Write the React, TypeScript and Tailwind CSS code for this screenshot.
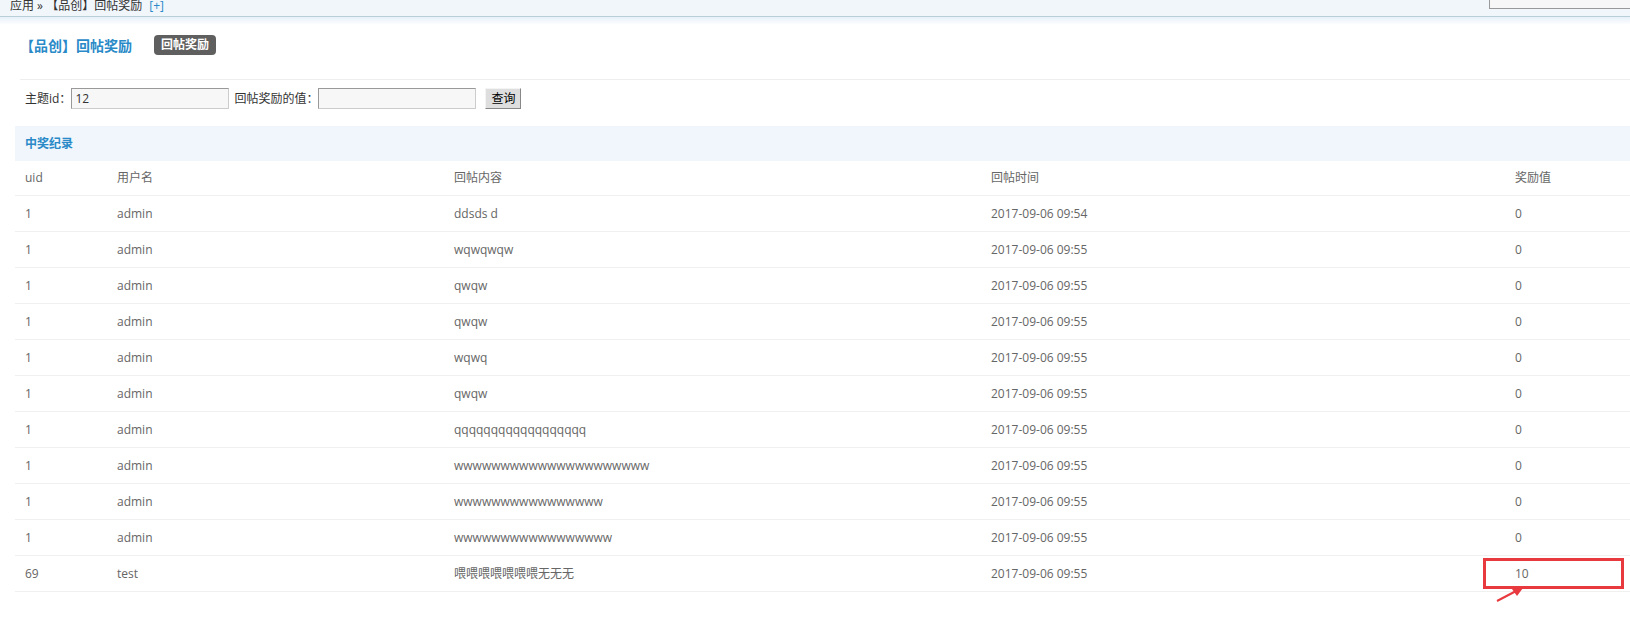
import React from 'react';

const rows = [
    { uid: '1', name: 'admin', content: 'ddsds d', time: '2017-09-06 09:54', value: '0' },
    { uid: '1', name: 'admin', content: 'wqwqwqw', time: '2017-09-06 09:55', value: '0' },
    { uid: '1', name: 'admin', content: 'qwqw', time: '2017-09-06 09:55', value: '0' },
    { uid: '1', name: 'admin', content: 'qwqw', time: '2017-09-06 09:55', value: '0' },
    { uid: '1', name: 'admin', content: 'wqwq', time: '2017-09-06 09:55', value: '0' },
    { uid: '1', name: 'admin', content: 'qwqw', time: '2017-09-06 09:55', value: '0' },
    { uid: '1', name: 'admin', content: 'qqqqqqqqqqqqqqqqqq', time: '2017-09-06 09:55', value: '0' },
    { uid: '1', name: 'admin', content: 'wwwwwwwwwwwwwwwwwwwww', time: '2017-09-06 09:55', value: '0' },
    { uid: '1', name: 'admin', content: 'wwwwwwwwwwwwwwww', time: '2017-09-06 09:55', value: '0' },
    { uid: '1', name: 'admin', content: 'wwwwwwwwwwwwwwwww', time: '2017-09-06 09:55', value: '0' },
    { uid: '69', name: 'test', content: '喂喂喂喂喂喂喂无无无', time: '2017-09-06 09:55', value: '10' },
];

function Row({ cells, head }: { cells: string[]; head?: boolean }) {
    return (
        <div className={`flex items-center border-b border-[#f0f0f0] text-[12px] text-[#666] ${head ? 'h-[35px]' : 'h-[36px]'}`}>
            <div className="w-[92px] pl-[10px]">{cells[0]}</div>
            <div className="w-[337px] pl-[10px]">{cells[1]}</div>
            <div className="w-[537px] pl-[10px]">{cells[2]}</div>
            <div className="w-[524px] pl-[10px]">{cells[3]}</div>
            <div className="flex-1 pl-[10px]">{cells[4]}</div>
        </div>
    );
}

export default function App() {
    return (
        <div className="relative w-[1630px] h-[627px] overflow-hidden bg-white" style={{ fontFamily: '"Open Sans", "Noto Sans CJK SC", sans-serif' }}>
            {/* top nav */}
            <div className="flex items-end justify-between h-[17px] bg-[#f1f6fb] border-b border-[#b8cfd8]">
                <div className="pl-[10px] text-[12px] leading-[12px] text-[#333] pb-[4px] whitespace-nowrap">
                    应用 » 【品创】回帖奖励 <span className="text-[#2a8ac8] ml-[4px]">[+]</span>
                </div>
                <div className="self-start w-[141px] h-[9px] bg-[#f7f7f7] border-l border-b border-[#999]" />
            </div>
            <div className="h-[8px] bg-gradient-to-b from-[#e6f0f9] to-white" />

            {/* title */}
            <div className="ml-[20px] h-[55px] pt-[10px] border-b border-[#eeeeee]">
                <div className="flex items-center h-[20px]">
                    <span className="text-[14px] font-bold text-[#2a8ac8]">【品创】回帖奖励</span>
                    <span className="ml-[22px] px-[7px] h-[20px] leading-[20px] rounded-[4px] bg-[#5f5f5f] text-white text-[12px] font-bold">回帖奖励</span>
                </div>
            </div>

            {/* form */}
            <div className="flex items-start h-[41px] pt-[8px] pl-[25px] text-[12px] text-[#333]">
                <span className="leading-[21px]">主题id：</span>
                <input defaultValue="12" className="w-[158px] h-[21px] px-[3px] bg-[#f7f7f7] border border-[#999] border-r-[#ccc] border-b-[#ccc] text-[12px] outline-none" />
                <span className="ml-[5px] leading-[21px]">回帖奖励的值：</span>
                <input className="w-[158px] h-[21px] px-[3px] bg-[#f7f7f7] border border-[#999] border-r-[#ccc] border-b-[#ccc] outline-none" />
                <button className="ml-[9px] h-[21px] w-[36px] bg-[#dedede] border border-[#f4f4f4] border-r-[#888] border-b-[#888] text-[12px] text-black leading-none">查询</button>
            </div>

            {/* records */}
            <div className="ml-[15px] mt-[5px]">
                <div className="h-[35px] flex items-center pl-[10px] bg-[#f0f6fc] text-[12px] font-bold text-[#2a8ac8]">中奖纪录</div>
                <Row head cells={['uid', '用户名', '回帖内容', '回帖时间', '奖励值']} />
                {rows.map((r, i) => (
                    <Row key={i} cells={[r.uid, r.name, r.content, r.time, r.value]} />
                ))}
            </div>

            {/* annotation */}
            <div className="absolute left-[1483px] top-[558px] w-[141px] h-[31px] border-[3px] border-[#e8393e]" />
            <svg className="absolute left-[1490px] top-[585px]" width="40" height="22" viewBox="0 0 40 22">
                <line x1="7" y1="16" x2="28" y2="5" stroke="#e8393e" strokeWidth="2" />
                <polygon points="33,3 22,4 27,11" fill="#e8393e" />
            </svg>
        </div>
    );
}
